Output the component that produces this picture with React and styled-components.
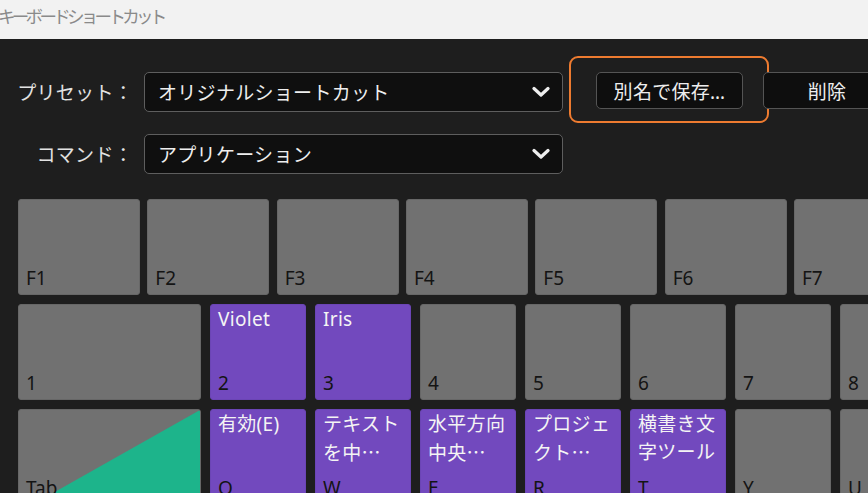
import React from 'react';
import styled, { createGlobalStyle } from 'styled-components';

const GlobalStyle = createGlobalStyle`
  html, body {
    margin: 0;
    padding: 0;
    background: #1e1e1e;
    overflow: hidden;
  }
  body {
    font-family: "Noto Sans", "Noto Sans CJK JP", sans-serif;
  }
`;

const Window = styled.div`
  width: 868px;
  height: 493px;
  overflow: hidden;
  display: flex;
  flex-direction: column;
`;

const TitleBar = styled.div`
  height: 39px;
  flex-shrink: 0;
  background: #f2f2f2;
  color: #8a8a8a;
  font-family: "Noto Sans CJK JP", sans-serif;
  font-size: 17.5px;
  letter-spacing: -3.7px;
  line-height: 31px;
  margin-left: -2px;
  white-space: nowrap;
`;

const Panel = styled.div`
  flex: 1;
  background: #1e1e1e;
  padding: 33px 0 0 18px;
  display: flex;
  flex-direction: column;
`;

const FormRow = styled.div`
  display: flex;
  align-items: flex-start;
  margin-bottom: ${(p) => p.$mb}px;
`;

const Label = styled.div`
  width: 115px;
  height: 40px;
  margin-right: 11px;
  display: flex;
  align-items: center;
  justify-content: flex-end;
  color: #e2e2e2;
  font-size: 19px;
  letter-spacing: 0.3px;
  white-space: nowrap;
  flex-shrink: 0;
`;

const Select = styled.div`
  width: 419px;
  height: 40px;
  box-sizing: border-box;
  flex-shrink: 0;
  border: 1.5px solid #5e5e5e;
  border-radius: 5px;
  background: #0f0f0f;
  display: flex;
  align-items: center;
  justify-content: space-between;
  padding: 0 12px 0 13px;
  color: #eeeeee;
  font-size: 19px;
  letter-spacing: 0.3px;
  white-space: nowrap;
`;

const ButtonSlot = styled.div`
  position: relative;
  flex-shrink: 0;
  margin-left: ${(p) => p.$ml}px;

  ${(p) =>
    p.$highlight &&
    `
    &::after {
      content: '';
      position: absolute;
      left: -27px;
      top: -16px;
      width: 200px;
      height: 67px;
      box-sizing: border-box;
      border: 2px solid #ee7b30;
      border-radius: 9px;
      pointer-events: none;
    }
  `}
`;

const Button = styled.div`
  width: ${(p) => p.$w}px;
  height: 37px;
  box-sizing: border-box;
  border: 1.5px solid #545454;
  border-radius: 5px;
  background: #0e0e0e;
  color: #eeeeee;
  font-size: 19px;
  letter-spacing: 0.3px;
  display: flex;
  align-items: center;
  justify-content: center;
  white-space: nowrap;
`;

const Keyboard = styled.div`
  display: flex;
  flex-direction: column;
  gap: 9px;
`;

const KeyRow = styled.div`
  display: flex;
  gap: ${(p) => p.$gap}px;
`;

const Key = styled.div`
  position: relative;
  width: ${(p) => p.$w}px;
  height: 96px;
  flex-shrink: 0;
  box-sizing: border-box;
  border-radius: 3px;
  border: 1px solid ${(p) => (p.$purple ? '#6b45b5' : '#676767')};
  background: ${(p) => (p.$purple ? '#7249be' : '#717171')};
  display: flex;
  flex-direction: column;
  justify-content: space-between;
  padding: 0 7px 2px;
  overflow: hidden;

  ${(p) =>
    p.$split &&
    `
    &::before {
      content: '';
      position: absolute;
      inset: 0;
      background: #1db48b;
      clip-path: polygon(100% 0, 100% 100%, 8% 100%);
    }
  `}
`;

const Command = styled.div`
  position: relative;
  color: #f4f4f4;
  font-size: 19px;
  line-height: 28px;
  letter-spacing: 0.3px;
  white-space: nowrap;
`;

const CommandLine = styled.div`
  font-family: ${(p) =>
    p.$cjk ? '"Noto Sans CJK JP", sans-serif' : '"Noto Sans", "Noto Sans CJK JP", sans-serif'};
`;

const KeyName = styled.div`
  position: relative;
  color: #141414;
  font-size: 19px;
  line-height: 28px;
`;

const Chevron = () => (
  <svg width="18" height="12" viewBox="0 0 18 12" fill="none">
    <polyline
      points="2,2.5 9,9 16,2.5"
      stroke="#eeeeee"
      strokeWidth="3.2"
      strokeLinecap="round"
      strokeLinejoin="round"
    />
  </svg>
);

const fRow = ['F1', 'F2', 'F3', 'F4', 'F5', 'F6', 'F7', 'F8'];

const numRow = [
  { name: '1', w: 183 },
  { name: '2', cmd: ['Violet'] },
  { name: '3', cmd: ['Iris'] },
  { name: '4' },
  { name: '5' },
  { name: '6' },
  { name: '7' },
  { name: '8' },
];

const tabRow = [
  { name: 'Tab', w: 183, split: true },
  { name: 'Q', cmd: ['有効(E)'] },
  { name: 'W', cmd: ['テキスト', 'を中…'] },
  { name: 'E', cmd: ['水平方向', '中央…'] },
  { name: 'R', cmd: ['プロジェ', 'クト…'] },
  { name: 'T', cmd: ['横書き文', '字ツール'] },
  { name: 'Y' },
  { name: 'U' },
];

// lines ending in an ellipsis use the CJK font so the dots sit mid-height
const renderKey = (k) => (
  <Key key={k.name} $w={k.w || 96} $purple={!!k.cmd} $split={k.split}>
    <Command>
      {(k.cmd || []).map((line) => (
        <CommandLine key={line} $cjk={line.endsWith('…')}>
          {line}
        </CommandLine>
      ))}
    </Command>
    <KeyName>{k.name}</KeyName>
  </Key>
);

const App = () => {
  return (
    <Window>
      <GlobalStyle />
      <TitleBar>キーボードショートカット</TitleBar>
      <Panel>
        <FormRow $mb={22}>
          <Label>プリセット：</Label>
          <Select>
            <span>オリジナルショートカット</span>
            <Chevron />
          </Select>
          <ButtonSlot $ml={33} $highlight>
            <Button $w={147}>別名で保存…</Button>
          </ButtonSlot>
          <ButtonSlot $ml={20}>
            <Button $w={128}>削除</Button>
          </ButtonSlot>
        </FormRow>
        <FormRow $mb={25}>
          <Label>コマンド：</Label>
          <Select>
            <span>アプリケーション</span>
            <Chevron />
          </Select>
        </FormRow>
        <Keyboard>
          <KeyRow $gap={7.33}>
            {fRow.map((f) => (
              <Key key={f} $w={122}>
                <Command />
                <KeyName>{f}</KeyName>
              </Key>
            ))}
          </KeyRow>
          <KeyRow $gap={9}>{numRow.map(renderKey)}</KeyRow>
          <KeyRow $gap={9}>{tabRow.map(renderKey)}</KeyRow>
        </Keyboard>
      </Panel>
    </Window>
  );
};

export default App;
